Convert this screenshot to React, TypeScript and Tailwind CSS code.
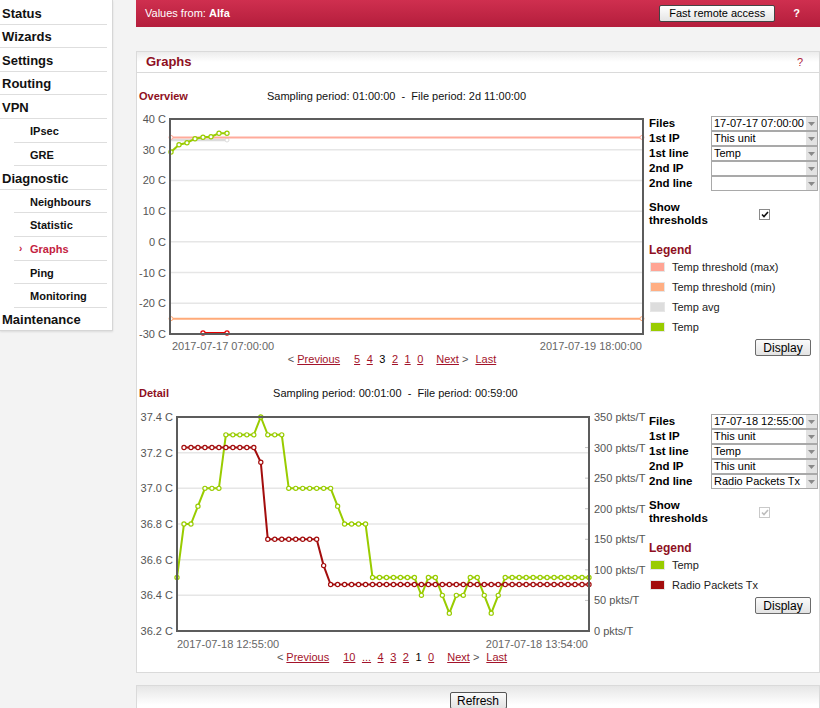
import React from 'react';

const LABEL_RED = 'text-[#8e0f22]';
const GREEN = '#99cc00';
const DARK_RED = '#a30d0d';

type NavItem = { label: string; sub?: boolean; active?: boolean };

const NAV: NavItem[] = [
  { label: 'Status' },
  { label: 'Wizards' },
  { label: 'Settings' },
  { label: 'Routing' },
  { label: 'VPN' },
  { label: 'IPsec', sub: true },
  { label: 'GRE', sub: true },
  { label: 'Diagnostic' },
  { label: 'Neighbours', sub: true },
  { label: 'Statistic', sub: true },
  { label: 'Graphs', sub: true, active: true },
  { label: 'Ping', sub: true },
  { label: 'Monitoring', sub: true },
  { label: 'Maintenance' },
];

function Sidebar() {
  return (
    <div className="w-[113px] shrink-0 bg-white border-r border-b border-[#d6d6d6] shadow-[0_1px_2px_rgba(0,0,0,0.1)] pt-px">
      {NAV.map((item, i) => (
        <div key={item.label}>
          <div
            className={`h-[22.6px] flex items-center pt-[2px] font-bold ${
              item.sub ? 'text-[11px]' : 'pl-[2px] text-[13px]'
            } ${item.sub && !item.active ? 'pl-[30px]' : ''} ${
              item.active ? 'pl-[19px] text-[#c4233f]' : 'text-[#111]'
            }`}
          >
            {item.active && <span className="w-[11px] text-[10px] leading-none">›</span>}
            {item.label}
          </div>
          {i < NAV.length - 1 && (
            <div className={`h-px bg-[#dedede] mr-[5px] ${item.sub ? 'ml-[14px]' : ''}`} />
          )}
        </div>
      ))}
    </div>
  );
}

function Select({ value }: { value: string }) {
  return (
    <div className="h-[15px] w-[107px] border border-[#a9a9a9] bg-white flex items-center">
      <span className="flex-1 pl-[2px] text-[11px] leading-none whitespace-nowrap overflow-hidden">{value}</span>
      <span className="w-[11px] h-[13px] bg-[#e2e2e2] flex items-center justify-center">
        <svg width="7" height="4" viewBox="0 0 7 4">
          <path d="M0 0h7L3.5 4z" fill="#8a8a8a" />
        </svg>
      </span>
    </div>
  );
}

function Checkbox({ disabled }: { disabled?: boolean }) {
  return (
    <span
      className={`w-[11px] h-[11px] border bg-white flex items-center justify-center ${
        disabled ? 'border-[#c9c9c9]' : 'border-[#8a8a8a]'
      }`}
    >
      <svg width="8" height="7" viewBox="0 0 8 7">
        <path d="M1 3.5l2 2L7 1" fill="none" stroke={disabled ? '#bdbdbd' : '#111'} strokeWidth="1.6" />
      </svg>
    </span>
  );
}

function Button({ children, w }: { children: React.ReactNode; w: string }) {
  return (
    <button
      className={`${w} h-[17px] border border-[#6b6b6b] rounded-[2px] bg-gradient-to-b from-[#fbfbfb] to-[#e3e3e3] text-[12px] leading-none text-black`}
    >
      {children}
    </button>
  );
}

type Control = { label: string; value: string };

function Controls({
  controls,
  legend,
  disabledCheck,
}: {
  controls: Control[];
  legend: { color: string; label: string }[];
  disabledCheck?: boolean;
}) {
  return (
    <div className="w-[171px] pl-[2px] flex flex-col">
      {controls.map((c) => (
        <div key={c.label} className="flex items-center h-[15px]">
          <span className="w-[62px] text-[11.5px] font-bold leading-none">{c.label}</span>
          <Select value={c.value} />
        </div>
      ))}
      <div className="mt-[10px] flex items-center">
        <span className="w-[110px] text-[11.5px] font-bold leading-[13px]">
          Show
          <br />
          thresholds
        </span>
        <Checkbox disabled={disabledCheck} />
      </div>
      <div className={`mt-[16px] h-[14px] flex items-center text-[12px] font-bold ${LABEL_RED}`}>Legend</div>
      {legend.map((l) => (
        <div key={l.label} className="h-[20px] flex items-center">
          <span className="ml-px w-[15px] h-[10px] border border-[#e6e6e6]" style={{ backgroundColor: l.color }} />
          <span className="ml-[7px] text-[11px] text-[#222]">{l.label}</span>
        </div>
      ))}
      <div className="mt-[2px] flex justify-end pr-[7px]">
        <Button w="w-[56px]">Display</Button>
      </div>
    </div>
  );
}

function PageLink({ children }: { children: React.ReactNode }) {
  return <span className="text-[#a3122a] underline">{children}</span>;
}

function Pager({ pages, current }: { pages: string[]; current: string }) {
  return (
    <div className="h-[14px] flex items-center justify-center text-[11px] text-[#555]">
      <span>&lt;&nbsp;</span>
      <PageLink>Previous</PageLink>
      <div className="ml-[14px] flex gap-[6.5px]">
        {pages.map((p) =>
          p === current ? (
            <span key={p} className="text-black">
              {p}
            </span>
          ) : (
            <PageLink key={p}>{p}</PageLink>
          ),
        )}
      </div>
      <span className="ml-[13px]">
        <PageLink>Next</PageLink>
      </span>
      <span>&nbsp;&gt;</span>
      <span className="ml-[7px]">
        <PageLink>Last</PageLink>
      </span>
    </div>
  );
}

const FONT = 'Liberation Sans, Arial, sans-serif';

function Dots({ pts, color }: { pts: [number, number][]; color: string }) {
  return (
    <g>
      <polyline points={pts.map((p) => p.join(',')).join(' ')} fill="none" stroke={color} strokeWidth="2" />
      {pts.map((p, i) => (
        <circle key={i} cx={p[0]} cy={p[1]} r="2.1" fill="#fff" stroke={color} strokeWidth="1.2" />
      ))}
    </g>
  );
}

function OverviewChart() {
  const top = 7;
  const bottom = 222;
  const left = 33;
  const right = 506;
  const y = (v: number) => top + ((40 - v) * (bottom - top)) / 70;
  const labels = [40, 30, 20, 10, 0, -10, -20, -30];
  const temp: [number, number][] = [
    [34, 40],
    [42, 32.7],
    [50, 30.7],
    [58, 26.7],
    [66, 25.3],
    [74, 24.7],
    [82, 21.3],
    [90, 21.3],
  ];
  const tMax = y(34);
  const tMin = y(-25);
  return (
    <svg width="510" height="240" fontFamily={FONT} fontSize="11">
      {labels.slice(1, -1).map((v) => (
        <line key={v} x1={left} x2={right} y1={y(v)} y2={y(v)} stroke="#e6e6e6" strokeWidth="1.5" />
      ))}
      {labels.map((v) => (
        <text key={v} x={29} y={y(v) + 4} textAnchor="end" fill="#555">
          {v} C
        </text>
      ))}
      <line x1={34} x2={90} y1={28} y2={28} stroke="#dcdcdc" strokeWidth="2.5" />
      <circle cx={90} cy={28} r="2" fill="#fff" stroke="#dcdcdc" />
      <line x1={34} x2={505} y1={tMax} y2={tMax} stroke="#ffab9b" strokeWidth="2" />
      <circle cx={34} cy={tMax} r="2" fill="#fff" stroke="#ffab9b" />
      <circle cx={505} cy={tMax} r="2" fill="#fff" stroke="#ffab9b" />
      <line x1={34} x2={505} y1={tMin} y2={tMin} stroke="#ffaa78" strokeWidth="2" />
      <circle cx={34} cy={tMin} r="2" fill="#fff" stroke="#ffaa78" />
      <circle cx={505} cy={tMin} r="2" fill="#fff" stroke="#ffaa78" />
      <Dots pts={temp} color={GREEN} />
      <Dots
        pts={[
          [66, 221],
          [90, 221],
        ]}
        color="#e60000"
      />
      <rect x={left} y={top} width={right - left} height={bottom - top} fill="none" stroke="#5c5c5c" strokeWidth="2" />
      <text x={35} y={238} fill="#666">
        2017-07-17 07:00:00
      </text>
      <text x={505} y={238} textAnchor="end" fill="#666">
        2017-07-19 18:00:00
      </text>
    </svg>
  );
}

const TEMP = [
  36.5, 36.8, 36.8, 36.9, 37.0, 37.0, 37.0, 37.3, 37.3, 37.3, 37.3, 37.3, 37.4, 37.3, 37.3, 37.3,
  37.0, 37.0, 37.0, 37.0, 37.0, 37.0, 37.0, 36.9, 36.8, 36.8, 36.8, 36.8,
  36.5, 36.5, 36.5, 36.5, 36.5, 36.5, 36.5, 36.4, 36.5, 36.5, 36.4, 36.3, 36.4, 36.4, 36.5, 36.5, 36.4, 36.3, 36.4,
  36.5, 36.5, 36.5, 36.5, 36.5, 36.5, 36.5, 36.5, 36.5, 36.5, 36.5, 36.5, 36.5,
];

const RADIO: number[] = Array.from({ length: 60 }, (_, i) => {
  if (i <= 11) return 300;
  if (i === 12) return 276;
  if (i <= 20) return 150;
  if (i === 21) return 107;
  return 76;
});

function DetailChart() {
  const top = 9;
  const bottom = 223;
  const left = 40;
  const right = 452;
  const x = (i: number) => left + (i * (right - left)) / 59;
  const yL = (v: number) => top + ((37.4 - v) / 1.2) * (bottom - top);
  const yR = (v: number) => bottom - (v / 350) * (bottom - top);
  const leftLabels = ['37.4', '37.2', '37.0', '36.8', '36.6', '36.4', '36.2'];
  const rightLabels = [350, 300, 250, 200, 150, 100, 50, 0];
  const temp: [number, number][] = TEMP.map((v, i) => [x(i), yL(v)]);
  const radio: [number, number][] = RADIO.slice(1).map((v, i) => [x(i + 1), yR(v)]);
  return (
    <svg width="512" height="242" fontFamily={FONT} fontSize="11">
      {leftLabels.slice(1, -1).map((v) => (
        <line key={v} x1={left} x2={right} y1={yL(+v)} y2={yL(+v)} stroke="#e6e6e6" strokeWidth="1.5" />
      ))}
      {leftLabels.map((v) => (
        <text key={v} x={36} y={yL(+v) + 4} textAnchor="end" fill="#555">
          {v} C
        </text>
      ))}
      {rightLabels.map((v) => (
        <g key={v}>
          {v !== 0 && v !== 350 && (
            <line x1={448} x2={452} y1={yR(v)} y2={yR(v)} stroke="#c4c4c4" />
          )}
          <text x={457} y={yR(v) + 4} fill="#555">
            {v} pkts/T
          </text>
        </g>
      ))}
      <Dots pts={temp} color={GREEN} />
      <Dots pts={radio} color={DARK_RED} />
      <rect x={left} y={top} width={right - left} height={bottom - top} fill="none" stroke="#5c5c5c" strokeWidth="2" />
      <text x={40} y={240} fill="#666">
        2017-07-18 12:55:00
      </text>
      <text x={451} y={240} textAnchor="end" fill="#666">
        2017-07-18 13:54:00
      </text>
    </svg>
  );
}

function SectionTitle({ title, text }: { title: string; text: string }) {
  return (
    <div className="h-[16px] flex items-center">
      <span className={`w-[130px] pl-[2px] text-[11px] font-bold ${LABEL_RED}`}>{title}</span>
      <span className="text-[11px] text-[#111] whitespace-pre">{text}</span>
    </div>
  );
}

export default function App() {
  return (
    <div className="w-[820px] h-[708px] overflow-hidden bg-[#f3f3f3] flex items-start font-['Liberation_Sans',Arial,sans-serif] text-black">
      <Sidebar />
      <div className="ml-[23px] w-[684px] shrink-0 flex flex-col">
        <div className="h-[27px] bg-gradient-to-b from-[#cf2f4f] to-[#b41d3c] flex items-center text-white text-[11px]">
          <span className="pl-[9px] flex-1">
            Values from: <b>Alfa</b>
          </span>
          <button className="w-[116px] h-[17px] border border-[#444] rounded-[2px] bg-gradient-to-b from-white to-[#e4e4e4] text-[11px] leading-none text-black">
            Fast remote access
          </button>
          <span className="ml-[18px] mr-[20px] font-bold">?</span>
        </div>

        <div className="mt-[24px] border border-[#dadada] bg-white">
          <div className="h-[21px] border-b border-[#dadada] bg-gradient-to-b from-[#ececec] via-white to-white flex items-center justify-between pl-[9px] pr-[16px]">
            <span className={`text-[13px] font-bold ${LABEL_RED}`}>Graphs</span>
            <span className="text-[11px] text-[#b0223a]">?</span>
          </div>

          <div className="pt-[15px] pb-[8px]">
            <SectionTitle title="Overview" text="Sampling period: 01:00:00  -  File period: 2d 11:00:00" />
            <div className="mt-[8px] flex items-start">
              <div className="w-[510px] flex flex-col">
                <OverviewChart />
                <Pager pages={['5', '4', '3', '2', '1', '0']} current="3" />
              </div>
              <div className="pt-[4px]">
                <Controls
                  controls={[
                    { label: 'Files', value: '17-07-17 07:00:00' },
                    { label: '1st IP', value: 'This unit' },
                    { label: '1st line', value: 'Temp' },
                    { label: '2nd IP', value: '' },
                    { label: '2nd line', value: '' },
                  ]}
                  legend={[
                    { color: '#ffa494', label: 'Temp threshold (max)' },
                    { color: '#ffae83', label: 'Temp threshold (min)' },
                    { color: '#dddddd', label: 'Temp avg' },
                    { color: GREEN, label: 'Temp' },
                  ]}
                />
              </div>
            </div>

            <div className="mt-[19px]">
              <SectionTitle title="Detail" text="  Sampling period: 00:01:00  -  File period: 00:59:00" />
            </div>
            <div className="mt-[7px] flex items-start">
              <div className="w-[510px] flex flex-col">
                <DetailChart />
                <Pager pages={['10', '...', '4', '3', '2', '1', '0']} current="1" />
              </div>
              <div className="pt-[6px]">
                <Controls
                  disabledCheck
                  controls={[
                    { label: 'Files', value: '17-07-18 12:55:00' },
                    { label: '1st IP', value: 'This unit' },
                    { label: '1st line', value: 'Temp' },
                    { label: '2nd IP', value: 'This unit' },
                    { label: '2nd line', value: 'Radio Packets Tx' },
                  ]}
                  legend={[
                    { color: GREEN, label: 'Temp' },
                    { color: DARK_RED, label: 'Radio Packets Tx' },
                  ]}
                />
              </div>
            </div>
          </div>
        </div>

        <div className="mt-[12px] h-[40px] border border-[#dadada] bg-gradient-to-b from-[#e6e6e6] via-white to-white flex justify-center pt-[6px]">
          <button className="w-[57px] h-[17px] border border-[#555] rounded-[2px] bg-gradient-to-b from-[#fbfbfb] to-[#e3e3e3] text-[12px] leading-none">
            Refresh
          </button>
        </div>
      </div>
    </div>
  );
}
